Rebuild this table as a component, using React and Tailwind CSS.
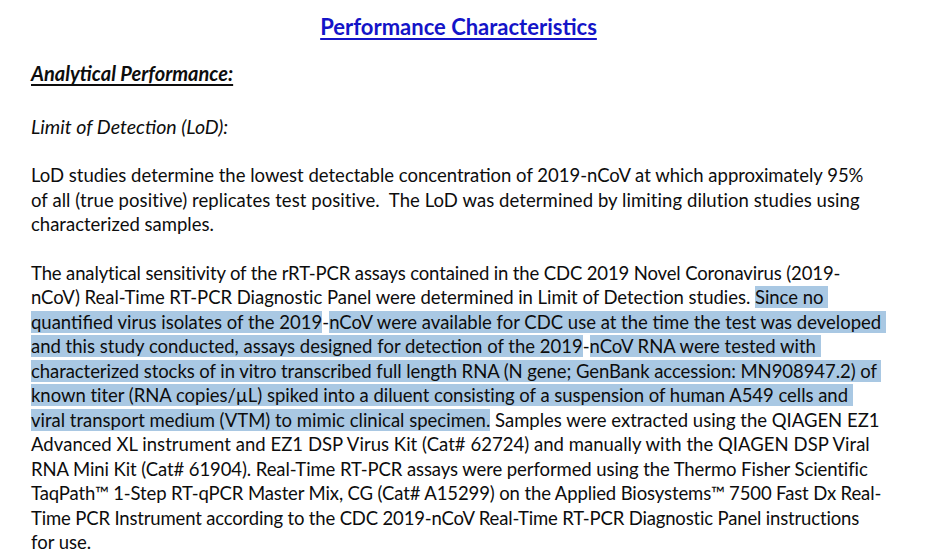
import React from 'react'

const hl = 'bg-[#a9c8e3]'

function App () {
  return (
    <div className="min-h-screen bg-white text-[#0d0d0d] px-[31px] font-['Lato','Liberation_Sans',sans-serif] text-[18.5px]">
      <div className="pt-[13px] pr-[22px] leading-[28px] text-center">
        <span className="text-[22px] font-bold text-[#1414c8] underline underline-offset-[3px]">Performance Characteristics</span>
      </div>

      <div className="mt-[19px] leading-[24px]">
        <span className="text-[20px] font-bold italic underline underline-offset-[3px]">Analytical Performance:</span>
      </div>

      <div className="mt-[29px] leading-[24px] text-[19.6px] italic">Limit of Detection (LoD):</div>

      <div className="mt-[24px] leading-[24.5px] whitespace-pre">
        <div>LoD studies determine the lowest detectable concentration of 2019-nCoV at which approximately 95%</div>
        <div className="tracking-[0.075px]">of all (true positive) replicates test positive.  The LoD was determined by limiting dilution studies using</div>
        <div>characterized samples.</div>
      </div>

      <div className="mt-[24px] leading-[24.5px] whitespace-pre">
        <div className="tracking-[-0.13px]">The analytical sensitivity of the rRT-PCR assays contained in the CDC 2019 Novel Coronavirus (2019-</div>
        <div className="tracking-[-0.03px]">nCoV) Real-Time RT-PCR Diagnostic Panel were determined in Limit of Detection studies. <span className={hl}>Since no </span></div>
        <div><span className={hl}>quantified virus isolates of the 2019</span>-<span className={hl}>nCoV were available for CDC use at the time the test was developed </span></div>
        <div><span className={hl}>and this study conducted, assays designed for detection of the 2019</span>-<span className={hl}>nCoV RNA were tested with </span></div>
        <div className="tracking-[-0.06px]"><span className={hl}>characterized stocks of in vitro transcribed full length RNA (N gene; GenBank accession: MN908947.2) of </span></div>
        <div className="tracking-[-0.03px]"><span className={hl}>known titer (RNA copies/µL) spiked into a diluent consisting of a suspension of human A549 cells and </span></div>
        <div><span className={hl}>viral transport medium (VTM) to mimic clinical specimen.</span> Samples were extracted using the QIAGEN EZ1</div>
        <div className="tracking-[0.04px]">Advanced XL instrument and EZ1 DSP Virus Kit (Cat# 62724) and manually with the QIAGEN DSP Viral</div>
        <div className="tracking-[-0.09px]">RNA Mini Kit (Cat# 61904). Real-Time RT-PCR assays were performed using the Thermo Fisher Scientific</div>
        <div className="tracking-[-0.12px]">TaqPath™ 1-Step RT-qPCR Master Mix, CG (Cat# A15299) on the Applied Biosystems™ 7500 Fast Dx Real-</div>
        <div className="tracking-[-0.16px]">Time PCR Instrument according to the CDC 2019-nCoV Real-Time RT-PCR Diagnostic Panel instructions</div>
        <div>for use.</div>
      </div>
    </div>
  )
}

export default App
